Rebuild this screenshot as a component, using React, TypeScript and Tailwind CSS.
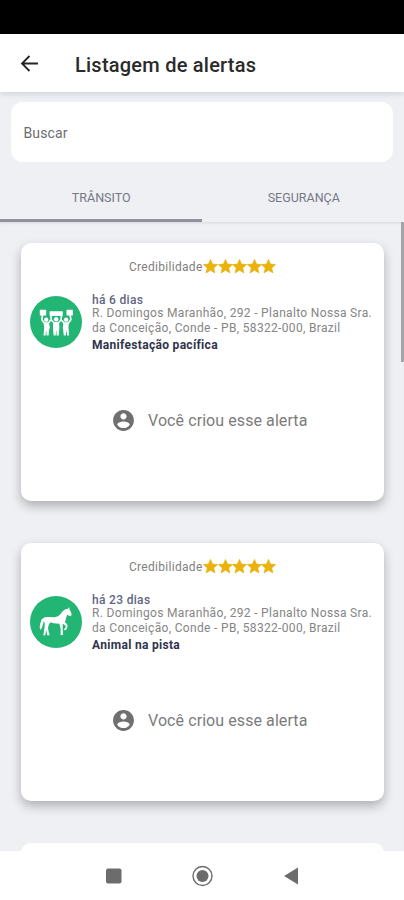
import React from 'react';

function ProtestIcon() {
  return (
    <svg viewBox="0 0 154 154" className="h-[52px] w-[52px] shrink-0">
      <circle cx="77" cy="77" r="77" fill="#22b573" />
      <g fill="#fff">
        <rect x="29" y="41" width="19" height="17" rx="2" />
        <rect x="58" y="45" width="39" height="14" rx="1" />
        <rect x="108" y="41" width="19" height="17" rx="2" />
        <circle cx="48" cy="70" r="6.5" />
        <circle cx="77.5" cy="69" r="6.5" />
        <circle cx="107" cy="70" r="6.5" />
        <path d="M40 78h16l3 17-2 3-2 19h-6l-1-16-2 16h-6l2-24zM69 77h17l1 17-2 23h-6l-1-17-2 17h-6l-2-23zM99 78h16l-1 16 2 23h-6l-2-16-2 16h-6l-2-19-1-3z" />
      </g>
      <g fill="none" stroke="#fff" strokeWidth="5" strokeLinecap="round" strokeLinejoin="round">
        <path d="M37 57l-2 13 8 11M54 81l7-9M62 58l1 13 9 9M93 58l-1 13-9 9M101 81l-6-8M119 57l2 13-8 11" />
      </g>
    </svg>
  );
}

function HorseIcon() {
  return (
    <svg viewBox="0 0 156 156" className="h-[52px] w-[52px] shrink-0">
      <circle cx="78" cy="78" r="78" fill="#22b573" />
      <path
        fill="#fff"
        d="M117 33l2 8 4 7 2 8-3 5-5-2-6-3-2 8-3 10-1 5 6 5 2 7-4 10-7 2 1-5 3-3 1-6-7-5-2 1 0 12 1 20h-8l1-4 0-15-4-15-17-1-9-3-5 6-3 10 2 12 3 11h-7l-1-4-3-13-1 9-1 8h-7l2-5 1-11 2-10 0-9-2-9-3 10-3 11-5 7-2-9 2-11 4-12 9-6 10-1 20 1 10-3 7-6 7-9 8-6 8-2z"
      />
    </svg>
  );
}

function Star() {
  return (
    <svg viewBox="0 0 24 24" className="-mx-[1.25px] h-[17px] w-[17px]" fill="#eab30c">
      <path
        d="M12 17.27 18.18 21l-1.64-7.03L22 9.24l-7.19-.61L12 2 9.19 8.63 2 9.24l5.46 4.73L5.82 21z"
        stroke="#eab30c"
        strokeWidth="1"
        strokeLinejoin="round"
      />
    </svg>
  );
}

function AlertCard({ icon, time, title }: { icon: React.ReactNode; time: string; title: string }) {
  return (
    <article className="h-[258px] w-[363px] shrink-0 rounded-[10px] bg-white pt-[15px] shadow-[0_5px_11px_rgba(0,0,0,0.27)]">
      <div className="flex h-4 items-center justify-center text-[12px] text-[#808080]">
        <span className="relative top-px tracking-[0.3px]">Credibilidade</span>
        <span className="ml-px flex">
          <Star />
          <Star />
          <Star />
          <Star />
          <Star />
        </span>
      </div>
      <div className="mt-[18px] flex h-[60px] items-center pl-[9px]">
        {icon}
        <div className="ml-[10px] mt-[2px] whitespace-nowrap text-[12px] leading-[15px]">
          <p className="h-[13px] font-medium tracking-[0.32px] text-[#626583]">{time}</p>
          <p className="tracking-[0.33px] text-[#858585]">
            R. Domingos Maranhão, 292 - Planalto Nossa Sra.
            <br />
            da Conceição, Conde - PB, 58322-000, Brazil
          </p>
          <p className="mt-[2px] font-bold tracking-[0.31px] text-[#30344d]">{title}</p>
        </div>
      </div>
      <div className="mt-[56px] flex h-6 items-center pl-[90px] text-[#7c7c7c]">
        <svg viewBox="0 0 24 24" className="h-[25px] w-[25px]" fill="#707070">
          <path d="M12 2C6.48 2 2 6.48 2 12s4.48 10 10 10 10-4.48 10-10S17.52 2 12 2zm0 3c1.66 0 3 1.34 3 3s-1.34 3-3 3-3-1.34-3-3 1.34-3 3-3zm0 14.2a7.2 7.2 0 0 1-6-3.22c.03-1.99 4-3.08 6-3.08 1.99 0 5.97 1.09 6 3.08a7.2 7.2 0 0 1-6 3.22z" />
        </svg>
        <span className="ml-3 mt-px text-[16px] tracking-[0.08px]">Você criou esse alerta</span>
      </div>
    </article>
  );
}

export default function App() {
  return (
    <div className="relative flex h-[900px] w-[404px] flex-col overflow-hidden bg-[#eff0f4] font-['Roboto',sans-serif]">
      <div className="h-[34px] shrink-0 bg-black" />
      <header className="z-10 flex h-[58px] shrink-0 items-center bg-white pl-[18px] shadow-[0_2px_6px_rgba(0,0,0,0.12)]">
        <svg viewBox="0 0 24 24" className="mt-[2px] h-6 w-6" fill="none" stroke="#242424" strokeWidth="1.8">
          <path d="M20 11.5H4.5M11.5 4 4 11.5l7.5 7.5" />
        </svg>
        <h1 className="ml-[33px] mt-[3px] whitespace-nowrap text-[20px] font-medium tracking-[0.23px] text-[#2a2a2a]">
          Listagem de alertas
        </h1>
      </header>
      <div className="mx-[11px] mt-[10px] flex h-[60px] shrink-0 items-center rounded-xl bg-white pl-[12.5px] pt-[2px] text-[14px] tracking-[0.15px] text-[#6a6d71]">
        Buscar
      </div>
      <nav className="flex h-[60px] shrink-0 text-[12.5px] text-[#757885]">
        <div className="flex flex-1 items-center justify-center border-b-[3px] border-[#9092a0] pl-px pt-[16px]">TRÂNSITO</div>
        <div className="flex flex-1 items-center justify-center border-b-[3px] border-b-transparent pl-[2px] pt-[16px]">SEGURANÇA</div>
      </nav>
      <main className="flex min-h-0 flex-1 flex-col gap-[42px] overflow-hidden pl-[21px] pt-[21px] shadow-[inset_0_3px_3px_-2px_rgba(0,0,0,0.1)]">
        <AlertCard icon={<ProtestIcon />} time="há 6 dias" title="Manifestação pacífica" />
        <AlertCard icon={<HorseIcon />} time="há 23 dias" title="Animal na pista" />
        <div className="h-[258px] w-[363px] shrink-0 rounded-[10px] bg-white" />
      </main>
      <div className="absolute right-0 top-[222px] h-[140px] w-[3px] bg-[#a3a4a7]" />
      <footer className="flex h-[49px] shrink-0 bg-white pl-[102px] pt-[13px]">
        <svg viewBox="0 0 200 24" className="h-6 w-[200px]">
          <rect x="4" y="4.5" width="15.5" height="15" rx="2" fill="#6c6c6c" />
          <circle cx="100.5" cy="12" r="9.5" fill="none" stroke="#6c6c6c" strokeWidth="1.4" />
          <circle cx="100.5" cy="12" r="6" fill="#6c6c6c" />
          <path d="M182 12 196 3.5v17z" fill="#6c6c6c" />
        </svg>
      </footer>
    </div>
  );
}
